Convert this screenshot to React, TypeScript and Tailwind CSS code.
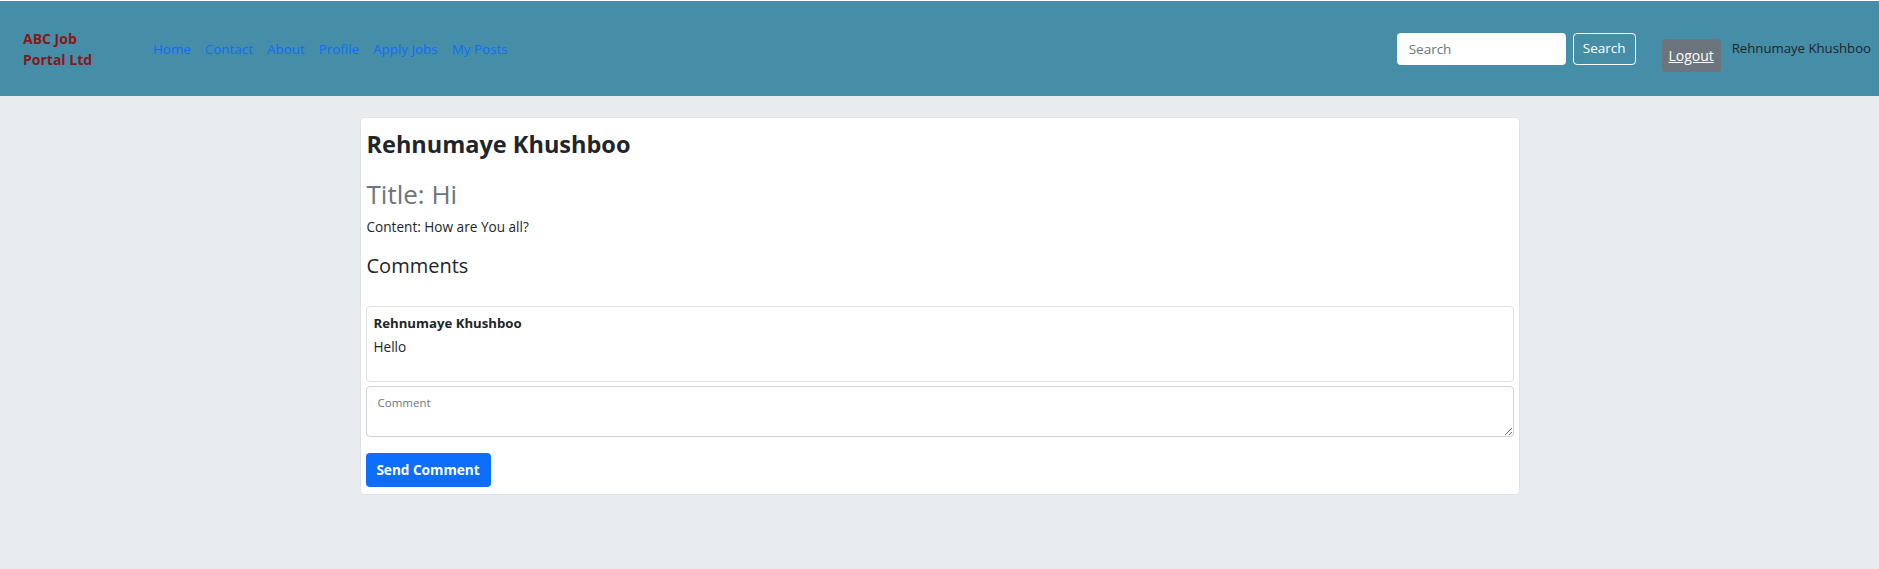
import React from 'react';

const links = ['Home', 'Contact', 'About', 'Profile', 'Apply Jobs', 'My Posts'];

const App: React.FC = () => {
  return (
    <div className="min-h-[569px] bg-[#e9ecef] font-['Open_Sans',sans-serif] text-[#212529]">
      {/* top navbar */}
      <nav className="flex h-[96px] items-center border-t border-white bg-[#468da7] pr-[8px]">
        <div className="w-[146px] pl-[23px] text-[14px] font-bold leading-[21px] text-[#861818]">
          ABC Job
          <br />
          Portal Ltd
        </div>
        <ul className="mt-[2px] flex items-center">
          {links.map((l) => (
            <li key={l}>
              <a href="#" className="block px-[7px] text-[13.4px] text-[#0d6efd]">
                {l}
              </a>
            </li>
          ))}
        </ul>
        <form className="ml-auto flex items-center gap-[7px]">
          <input
            placeholder="Search"
            className="h-[32px] w-[169px] rounded-[4px] bg-white px-[12px] text-[13.5px] outline-none placeholder:text-[#6c757d]"
          />
          <button
            type="button"
            className="h-[32px] w-[63px] rounded-[4px] border border-white text-[13.5px] text-white"
          >
            Search
          </button>
        </form>
        <a
          href="#"
          className="ml-[26px] mt-[14px] flex h-[33px] w-[59px] items-center justify-center rounded-[4px] bg-[#6c757d] text-[14px] text-white underline"
        >
          Logout
        </a>
        <span className="ml-[11px] text-[13.2px]">Rehnumaye Khushboo</span>
      </nav>

      {/* post card */}
      <div className="mx-auto mt-[21px] w-[1160px] rounded-[4px] border border-[#dee2e6] bg-white px-[5px] pb-[7px] pt-[12px]">
        <h4 className="px-px text-[23.5px] font-bold leading-[1.2]">Rehnumaye Khushboo</h4>
        <h3 className="mt-[20px] px-px text-[26px] leading-[1.3] text-[#6c757d]">Title: Hi</h3>
        <p className="mt-[4px] px-px text-[13.6px] leading-[1.6]">Content: How are You all?</p>
        <h5 className="mt-[15px] px-px text-[20px] leading-[1.25]">Comments</h5>

        <div className="mt-[28px] h-[76px] rounded-[4px] border border-[#dee2e6] px-[7px] pt-[6px]">
          <div className="text-[13.2px] font-bold leading-[1.6]">Rehnumaye Khushboo</div>
          <div className="mt-[3px] text-[13.6px] leading-[1.5]">Hello</div>
        </div>
        <textarea
          placeholder="Comment"
          className="mt-[4px] block h-[51px] w-full rounded-[4px] border border-[#ced4da] px-[11px] py-[7px] text-[11.5px] outline-none placeholder:text-[#6c757d]"
        />
        <button
          type="button"
          className="mt-[16px] h-[34px] w-[125px] rounded-[4px] bg-[#0d6efd] text-[13.6px] font-bold text-white"
        >
          Send Comment
        </button>
      </div>
    </div>
  );
};

export default App;
